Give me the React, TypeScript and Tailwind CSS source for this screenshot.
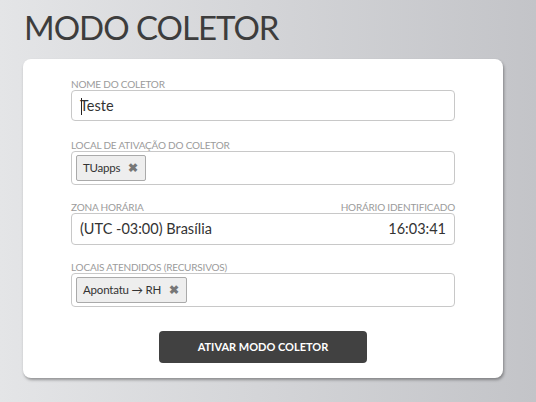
const labelCls =
  'block text-[10px] leading-[12px] uppercase text-[#9b9b9b] tracking-[-0.2px]';

const Tag = ({ children }: { children: React.ReactNode }) => (
  <span className="inline-flex h-[26px] items-center gap-[8px] rounded-[2px] border border-[#aaa] bg-[#eeeeee] pl-[6px] pr-[7px] text-[11.5px] tracking-[-0.2px] text-[#333]">
    {children}
    <span className="text-[12px] font-bold leading-none text-[#777]">✖</span>
  </span>
);

const App = () => {
  return (
    <div
      className="h-[402px] w-full overflow-hidden bg-linear-to-r from-[#e4e5e7] to-[#c3c4c8] pt-[6px]"
      style={{ fontFamily: 'Lato, "Open Sans", sans-serif' }}
    >
      <h1 className="pl-[24px] text-[33px] leading-[42px] tracking-[-1px] text-[#3d3d3d]">MODO COLETOR</h1>

      <div className="mt-[11px] ml-[23px] w-[480px] rounded-[8px] bg-white px-12 pt-[19px] pb-[15px] shadow-[1px_2px_3px_rgba(0,0,0,0.35)]">
        <div>
          <label className={labelCls}>Nome do coletor</label>
          <div className="relative flex h-[31px] items-center rounded-[4px] border border-[#c8c8c8] px-[8px] text-[14.5px] text-[#333]">
            <span className="absolute left-[9px] top-[7px] h-[17px] w-px bg-[#222]" />
            Teste
          </div>
        </div>

        <div className="mt-[18px]">
          <label className={labelCls}>Local de ativação do coletor</label>
          <div className="flex h-[34px] items-center rounded-[4px] border border-[#c8c8c8] px-[4px]">
            <Tag>TUapps</Tag>
          </div>
        </div>

        <div className="mt-[16px]">
          <div className="flex justify-between">
            <label className={labelCls}>Zona horária</label>
            <span className={labelCls}>Horário identificado</span>
          </div>
          <div className="flex h-[32px] items-center justify-between rounded-[4px] border border-[#c8c8c8] px-[8px] text-[14.5px] text-[#333]">
            <span>(UTC -03:00) Brasília</span>
            <span>16:03:41</span>
          </div>
        </div>

        <div className="mt-[16px]">
          <label className={labelCls}>Locais atendidos (recursivos)</label>
          <div className="flex h-[34px] items-center rounded-[4px] border border-[#c8c8c8] px-[4px]">
            <Tag>Apontatu → RH</Tag>
          </div>
        </div>

        <div className="mt-[24px] flex justify-center">
          <button className="h-[32px] w-[208px] rounded-[4px] bg-[#414141] text-[11px] font-bold uppercase text-white">
            Ativar modo coletor
          </button>
        </div>
      </div>
    </div>
  );
};

export default App;
